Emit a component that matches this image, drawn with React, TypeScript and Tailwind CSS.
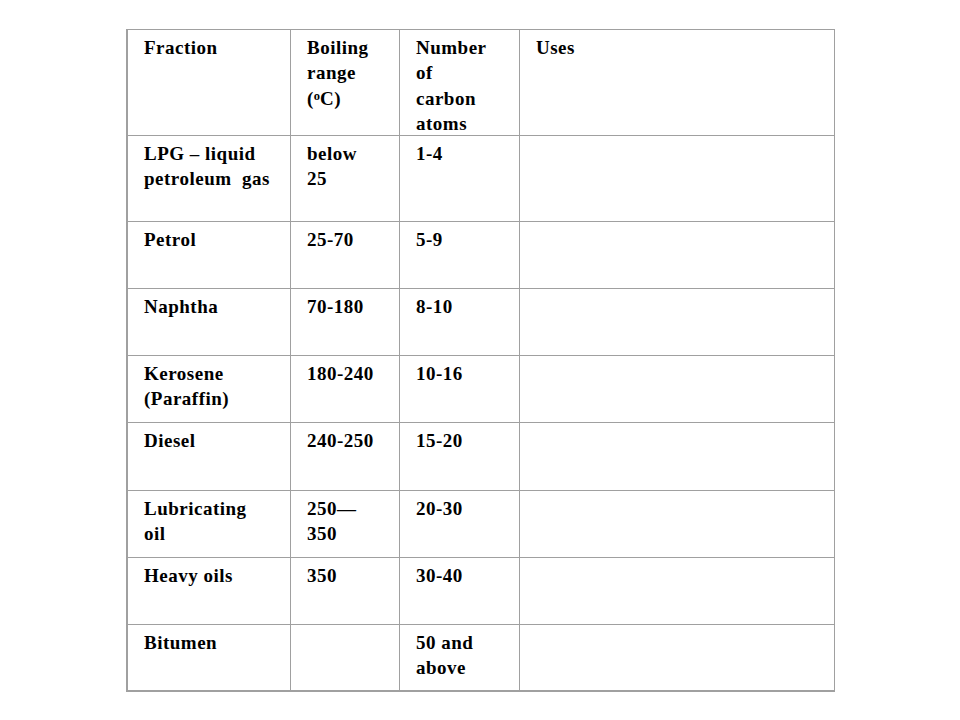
import type { ReactNode } from 'react'

type Row = { cells: ReactNode[]; h: string }

const rows: Row[] = [
  {
    h: 'h-[106px]',
    cells: [
      'Fraction',
      <>Boiling<br />range<br />(<sup className="text-[12.5px] -top-[5px] tracking-normal">o</sup>C)</>,
      <>Number<br />of<br />carbon<br />atoms</>,
      'Uses',
    ],
  },
  { h: 'h-[86px]', cells: [<>LPG – liquid<br />petroleum&nbsp; gas</>, <>below<br />25</>, '1-4', ''] },
  { h: 'h-[67px]', cells: ['Petrol', '25-70', '5-9', ''] },
  { h: 'h-[67px]', cells: ['Naphtha', '70-180', '8-10', ''] },
  { h: 'h-[67px]', cells: [<>Kerosene<br />(Paraffin)</>, '180-240', '10-16', ''] },
  { h: 'h-[68px]', cells: ['Diesel', '240-250', '15-20', ''] },
  { h: 'h-[67px]', cells: [<>Lubricating<br />oil</>, <>250—<br />350</>, '20-30', ''] },
  { h: 'h-[67px]', cells: ['Heavy oils', '350', '30-40', ''] },
  { h: 'h-[67px]', cells: ['Bitumen', '', <>50 and<br />above</>, ''] },
]

export default function App() {
  return (
    <div className="w-[960px] h-[720px] bg-white overflow-hidden">
      <div
        className="ml-[126px] mt-[29px] w-[709px] border-t border-l-2 border-[#a0a0a0] grid grid-cols-[163px_109px_120px_315px] text-black font-bold text-[19px] leading-[25.3px] tracking-[0.5px]"
        style={{ fontFamily: '"Liberation Serif", "Times New Roman", serif' }}
      >
        {rows.map((row, ri) =>
          row.cells.map((cell, ci) => (
            <div
              key={`${ri}-${ci}`}
              className={`${row.h} border-r border-[#a0a0a0] pl-4 pt-[5px] ${
                ri === rows.length - 1 ? 'border-b-2' : 'border-b'
              }`}
            >
              {cell}
            </div>
          ))
        )}
      </div>
    </div>
  )
}
